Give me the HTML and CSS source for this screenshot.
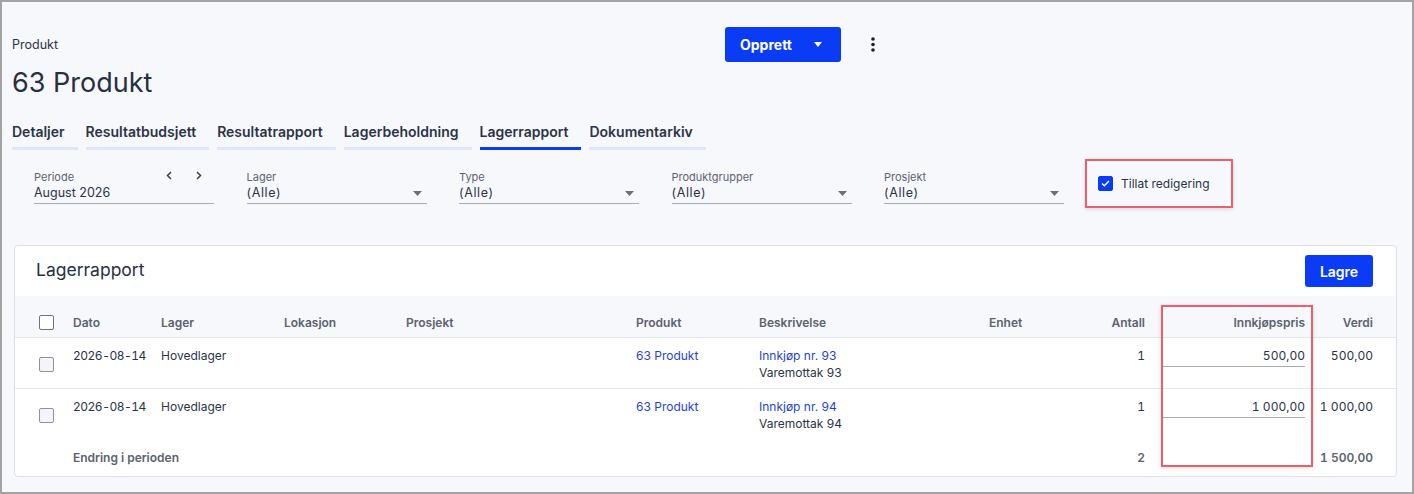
FILE: index.html
```html
<!DOCTYPE html>
<html lang="no">
<head>
<meta charset="utf-8">
<title>63 Produkt</title>
<link rel="stylesheet" href="styles.css">
</head>
<body>
<div class="frame">
  <div class="page">
    <header class="top">
      <div class="crumb">Produkt</div>
      <button class="btn btn-split">Opprett
        <svg class="caret" width="8" height="5" viewBox="0 0 8 5"><path d="M0 0h8L4 5z" fill="#fff"/></svg>
      </button>
      <button class="kebab" aria-label="Mer">
        <svg width="4" height="15" viewBox="0 0 4 15"><circle cx="2" cy="2" r="1.8"/><circle cx="2" cy="7.5" r="1.8"/><circle cx="2" cy="13" r="1.8"/></svg>
      </button>
    </header>

    <h1 class="title">63 Produkt</h1>

    <nav class="tabs">
      <a class="tab">Detaljer</a>
      <a class="tab">Resultatbudsjett</a>
      <a class="tab">Resultatrapport</a>
      <a class="tab">Lagerbeholdning</a>
      <a class="tab active">Lagerrapport</a>
      <a class="tab">Dokumentarkiv</a>
    </nav>

    <div class="filters">
      <div class="field">
        <div class="field-label">
          <span>Periode</span>
          <span class="nav-arrows">
            <svg width="6" height="9" viewBox="0 0 6 9"><path d="M5 1L1.5 4.5 5 8" fill="none" stroke="#3a4150" stroke-width="1.5"/></svg>
            <svg width="6" height="9" viewBox="0 0 6 9"><path d="M1 1l3.5 3.5L1 8" fill="none" stroke="#3a4150" stroke-width="1.5"/></svg>
          </span>
        </div>
        <div class="field-value">August 2026</div>
      </div>
      <div class="field">
        <div class="field-label">Lager</div>
        <div class="field-value"><span class="alle">(Alle)</span><svg class="drop" width="9" height="5" viewBox="0 0 9 5"><path d="M0 0h9L4.5 5z"/></svg></div>
      </div>
      <div class="field">
        <div class="field-label">Type</div>
        <div class="field-value"><span class="alle">(Alle)</span><svg class="drop" width="9" height="5" viewBox="0 0 9 5"><path d="M0 0h9L4.5 5z"/></svg></div>
      </div>
      <div class="field">
        <div class="field-label">Produktgrupper</div>
        <div class="field-value"><span class="alle">(Alle)</span><svg class="drop" width="9" height="5" viewBox="0 0 9 5"><path d="M0 0h9L4.5 5z"/></svg></div>
      </div>
      <div class="field last">
        <div class="field-label">Prosjekt</div>
        <div class="field-value"><span class="alle">(Alle)</span><svg class="drop" width="9" height="5" viewBox="0 0 9 5"><path d="M0 0h9L4.5 5z"/></svg></div>
      </div>
      <label class="edit-toggle">
        <span class="cb checked">
          <svg width="9" height="7" viewBox="0 0 9 7"><path d="M1 3.6l2.3 2.2L8 1" fill="none" stroke="#fff" stroke-width="1.4"/></svg>
        </span>
        <span>Tillat redigering</span>
      </label>
    </div>

    <section class="card">
      <div class="card-head">
        <h2>Lagerrapport</h2>
        <button class="btn btn-save">Lagre</button>
      </div>
      <div class="table">
        <div class="tr thead">
          <div class="td"><span class="cb"></span></div>
          <div class="td">Dato</div>
          <div class="td">Lager</div>
          <div class="td">Lokasjon</div>
          <div class="td">Prosjekt</div>
          <div class="td">Produkt</div>
          <div class="td">Beskrivelse</div>
          <div class="td">Enhet</div>
          <div class="td num">Antall</div>
          <div class="td num">Innkjøpspris</div>
          <div class="td num">Verdi</div>
        </div>
        <div class="tr row">
          <div class="td chk"><span class="cb light"></span></div>
          <div class="td date">2026-08-14</div>
          <div class="td">Hovedlager</div>
          <div class="td"></div>
          <div class="td"></div>
          <div class="td"><a class="link">63 Produkt</a></div>
          <div class="td"><a class="link">Innkjøp nr. 93</a><br>Varemottak 93</div>
          <div class="td"></div>
          <div class="td num">1</div>
          <div class="td num"><div class="input">500,00</div></div>
          <div class="td num">500,00</div>
        </div>
        <div class="tr row last">
          <div class="td chk"><span class="cb light"></span></div>
          <div class="td date">2026-08-14</div>
          <div class="td">Hovedlager</div>
          <div class="td"></div>
          <div class="td"></div>
          <div class="td"><a class="link">63 Produkt</a></div>
          <div class="td"><a class="link">Innkjøp nr. 94</a><br>Varemottak 94</div>
          <div class="td"></div>
          <div class="td num">1</div>
          <div class="td num"><div class="input">1 000,00</div></div>
          <div class="td num">1 000,00</div>
        </div>
        <div class="tr tfoot">
          <div class="td"></div>
          <div class="td span">Endring i perioden</div>
          <div class="td num qty">2</div>
          <div class="td"></div>
          <div class="td num">1 500,00</div>
        </div>
      </div>
      <div class="highlight"></div>
    </section>
  </div>
</div>
</body>
</html>
```

FILE: styles.css
```css
* { box-sizing: border-box; }
body { margin: 0; }

.frame {
  width: 1414px;
  height: 494px;
  border: 2px solid #a3a3a3;
  background: #f7f8fc;
  overflow: hidden;
  font-family: Inter, "Noto Sans", sans-serif;
  color: #2b3447;
}
.page { padding: 25px 10px 0; }

.top { display: flex; align-items: center; height: 35px; }
.crumb { width: 713px; font-size: 12.5px; line-height: 16px; }
.btn {
  border: none;
  background: #0b3cf5;
  color: #fff;
  font-family: inherit;
  border-radius: 3px;
  cursor: pointer;
}
.btn-split {
  display: flex;
  align-items: center;
  height: 35px;
  width: 116px;
  padding: 0 0 0 15px;
  font-size: 14px;
  font-weight: 700;
}
.caret { margin-left: 22px; }
.kebab {
  margin-left: 30px;
  border: none;
  background: none;
  padding: 0;
  display: flex;
  fill: #1b1f27;
}

.title {
  margin: 5px 0 0;
  font-size: 27px;
  line-height: 32px;
  font-weight: 400;
  color: #263042;
}

.tabs { display: flex; gap: 8px; margin-top: 23px; }
.tab {
  font-size: 14px;
  line-height: 20px;
  font-weight: 600;
  padding: 0 13px 5px 0;
  border-bottom: 3px solid #e0e6f7;
  color: #2b3447;
}
.tab.active { border-bottom-color: #0b3cf5; }

.filters {
  display: flex;
  align-items: flex-start;
  margin-top: 9px;
  padding-left: 22px;
}
.field { width: 180px; margin: 11px 32.5px 0 0; }
.field.last { margin-right: 21px; }
.field-label {
  display: flex;
  justify-content: space-between;
  align-items: center;
  font-size: 11px;
  line-height: 14px;
  color: #5d6370;
}
.nav-arrows { display: flex; gap: 24px; padding-right: 12px; margin-top: -4px; }
.field-value {
  display: flex;
  justify-content: space-between;
  align-items: center;
  font-size: 12.5px;
  line-height: 17px;
  padding-bottom: 2px;
  border-bottom: 1px solid #a9acb3;
}
.alle { letter-spacing: 0.6px; }
.drop { fill: #6b707b; margin-right: 5px; margin-top: 2px; }

.edit-toggle {
  display: flex;
  align-items: center;
  gap: 8px;
  width: 148px;
  height: 49px;
  padding-left: 11px;
  border: 2.5px solid #e8606b;
  box-shadow: 0 1px 4px rgba(0, 0, 0, 0.15);
  font-size: 12px;
  color: #2b3447;
}

.cb {
  display: inline-flex;
  align-items: center;
  justify-content: center;
  width: 15px;
  height: 15px;
  border: 1px solid #6f7482;
  border-radius: 2px;
  background: #fff;
}
.cb.checked { background: #0b3cf5; border-color: #0b3cf5; }
.cb.light { background: #f3f5fa; border-color: #8d929c; }

.card {
  position: relative;
  width: 1383px;
  margin: 37px 0 0 2px;
  background: #fff;
  border: 1px solid #dcdfe6;
  border-radius: 4px;
}
.card-head {
  display: flex;
  justify-content: space-between;
  align-items: flex-start;
  height: 50px;
  padding: 9px 23px 0 21px;
}
.card-head h2 {
  margin: 3px 0 0;
  font-size: 17.5px;
  line-height: 24px;
  font-weight: 400;
  color: #263042;
}
.btn-save {
  width: 68px;
  height: 32px;
  font-size: 14px;
  font-weight: 600;
}

.tr {
  display: grid;
  grid-template-columns: 34px 88px 123px 122px 230px 123px 230px 71px 85px 160px 68px;
  padding: 0 24px;
}
.thead {
  height: 42px;
  padding-top: 11px;
  align-items: center;
  background: #f7f8fb;
  border-bottom: 1px solid #e4e6eb;
  font-size: 12px;
  font-weight: 600;
  color: #5b6270;
}
.row {
  padding-top: 9px;
  padding-bottom: 7px;
  border-bottom: 1px solid #e4e6eb;
  font-size: 12px;
  line-height: 17px;
  align-items: start;
}
.row.last { border-bottom: none; }
.td.chk { align-self: center; display: flex; }
.thead .td:first-child { display: flex; }
.num { text-align: right; font-variant-numeric: tabular-nums; }
.date { font-variant-numeric: tabular-nums; letter-spacing: -0.5px; }
.link { color: #1f43d6; text-decoration: none; }
.input {
  margin-left: 18px;
  padding-bottom: 2px;
  border-bottom: 1px solid #a9acb3;
}
.tfoot {
  padding-top: 10px;
  padding-bottom: 10px;
  font-size: 12px;
  line-height: 17px;
  font-weight: 600;
  color: #5b6270;
}
.tfoot .span { grid-column: 2 / 9; }
.tfoot .qty { grid-column: 9; }

.highlight {
  position: absolute;
  left: 1146px;
  top: 59px;
  width: 152px;
  height: 162px;
  border: 2.5px solid #e8606b;
  box-shadow: 0 1px 4px rgba(0, 0, 0, 0.15);
  pointer-events: none;
}
```
